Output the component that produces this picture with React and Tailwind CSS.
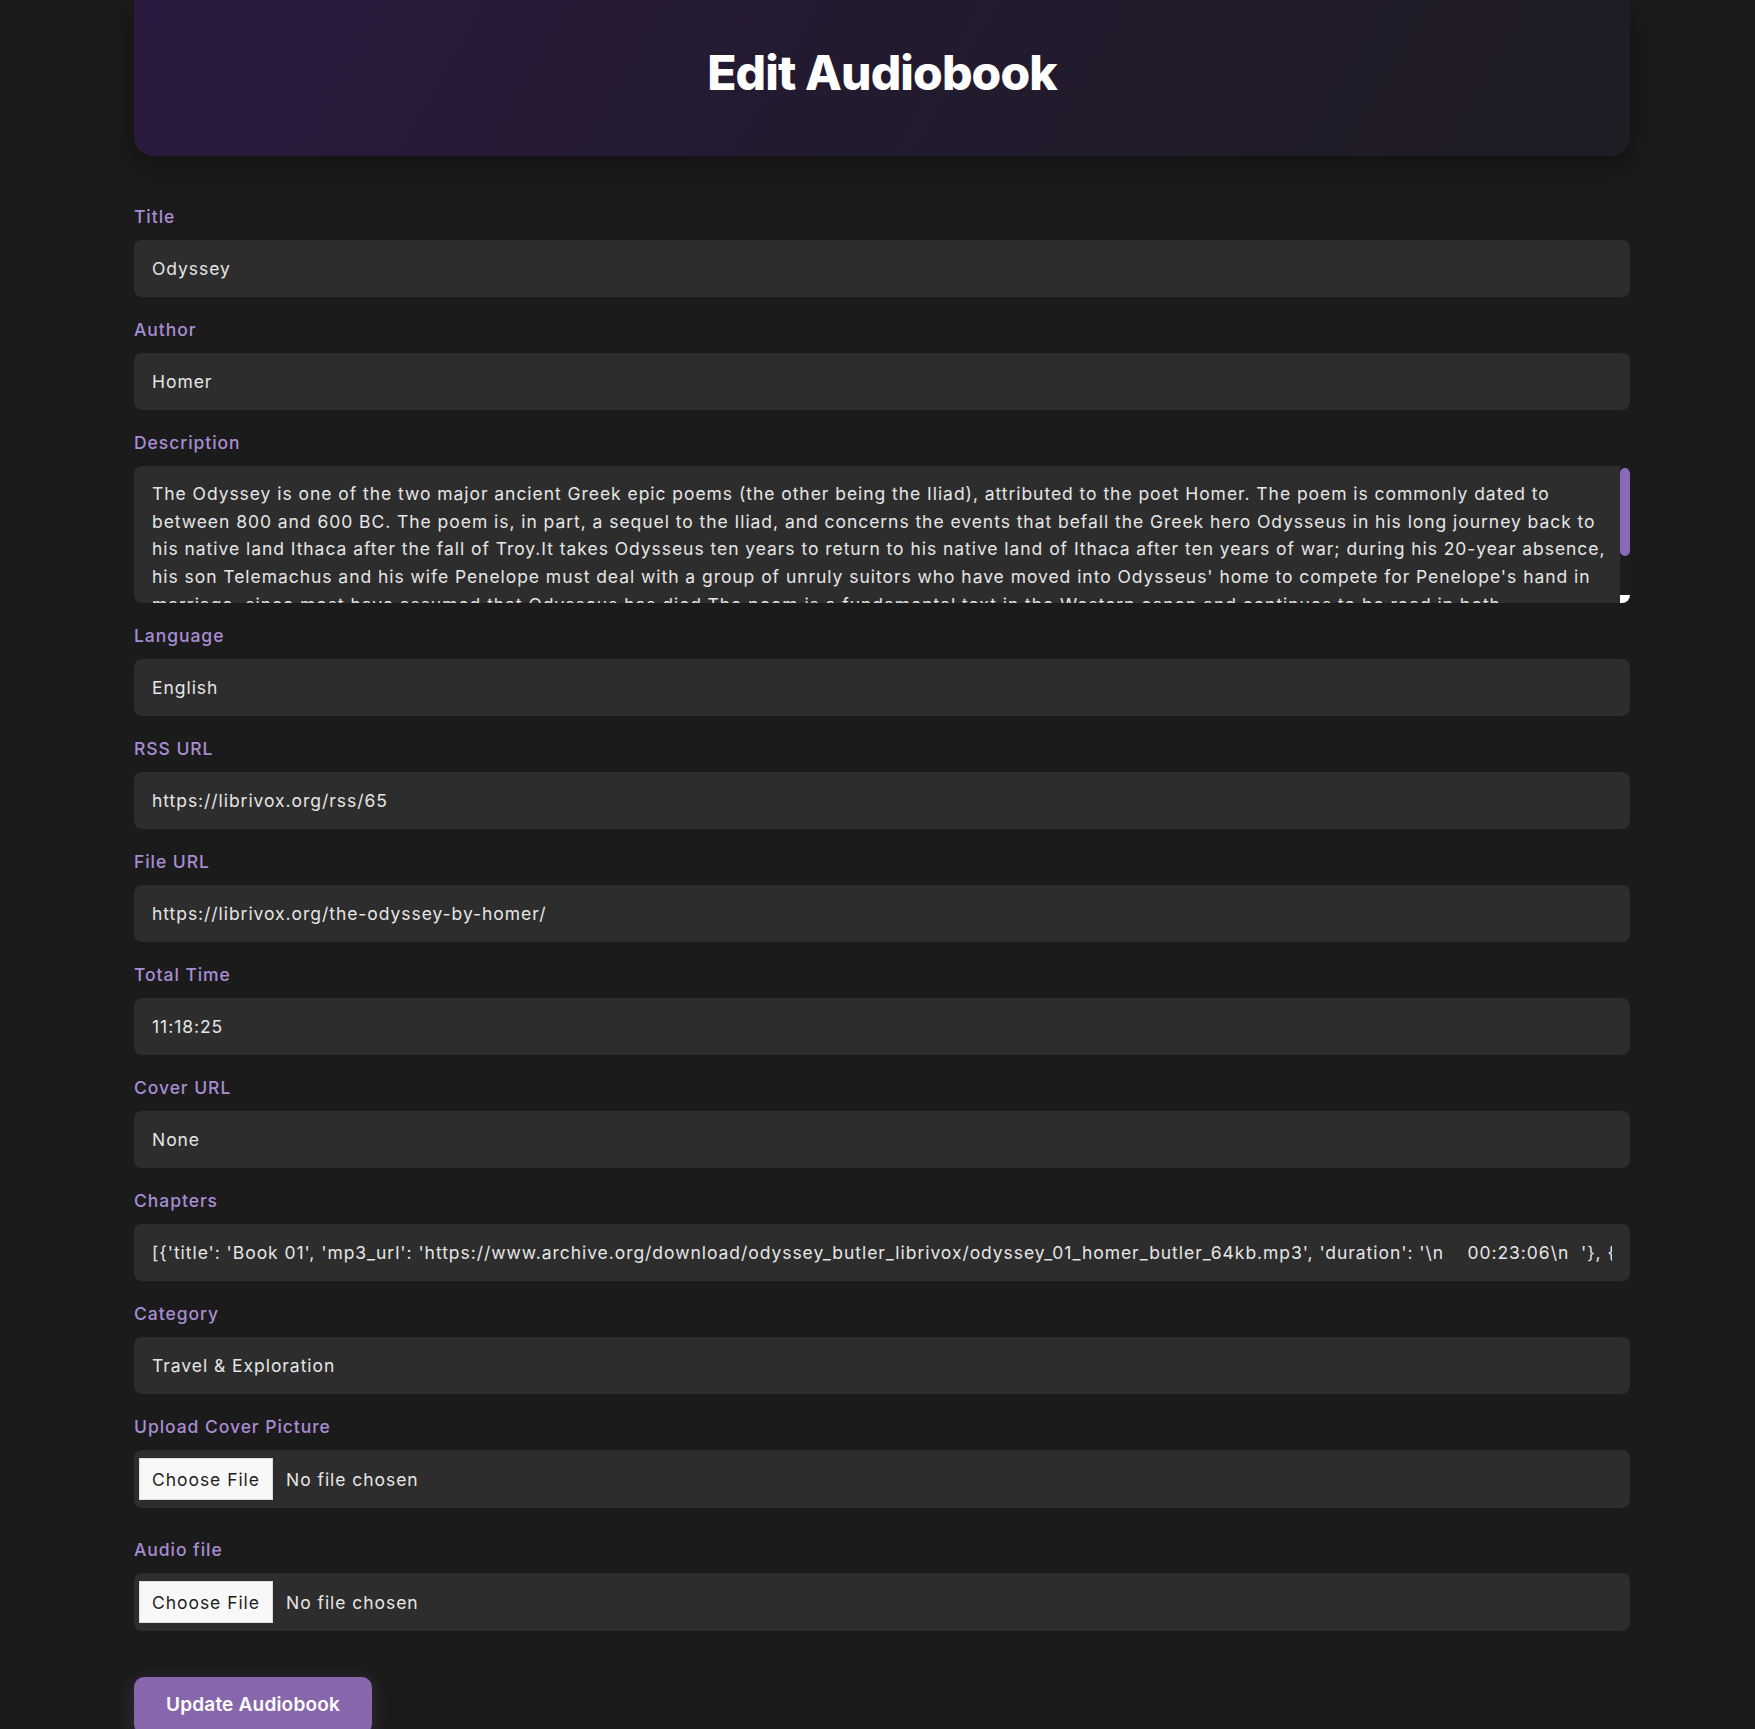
import { useState } from 'react';

const descriptionLines = [
    'The Odyssey is one of the two major ancient Greek epic poems (the other being the Iliad), attributed to the poet Homer. The poem is commonly dated to',
    'between 800 and 600 BC. The poem is, in part, a sequel to the Iliad, and concerns the events that befall the Greek hero Odysseus in his long journey back to',
    'his native land Ithaca after the fall of Troy.It takes Odysseus ten years to return to his native land of Ithaca after ten years of war; during his 20-year absence,',
    "his son Telemachus and his wife Penelope must deal with a group of unruly suitors who have moved into Odysseus' home to compete for Penelope's hand in",
    'marriage, since most have assumed that Odysseus has died.The poem is a fundamental text in the Western canon and continues to be read in both',
];

const chapters =
    "[{'title': 'Book 01', 'mp3_url': 'https://www.archive.org/download/odyssey_butler_librivox/odyssey_01_homer_butler_64kb.mp3', 'duration': '\\n    00:23:06\\n  '}, {'title': 'Book 02', 'mp3_url': 'https://www.archive.org/download/odyssey_butler_librivox/odyssey_02_homer_butler_64kb.mp3'}]";

const labelClass =
    'mb-[11px] block text-[17.5px] font-medium leading-[25px] text-[#a88dd3]';
const inputClass =
    'h-[57px] w-full rounded-[8px] bg-[#2d2d2d] px-[18px] text-[17.5px] text-[#e6e6e6] outline-none';
const fileClass =
    'block h-[58px] w-full rounded-[8px] bg-[#2d2d2d] px-[5px] py-[8px] text-[17.5px] leading-[42px] text-[#e6e6e6] file:mr-[13px] file:h-[42px] file:w-[134px] file:border file:border-[#dcdcdc] file:bg-[#f8f8f8] file:text-[17.5px] file:text-[#1f1f1f]';

function TextField({ label, value }) {
    const [val, setVal] = useState(value);
    return (
        <div className="mb-[20px]">
            <label className={labelClass}>{label}</label>
            <input
                className={inputClass}
                value={val}
                onChange={(e) => setVal(e.target.value)}
            />
        </div>
    );
}

export default function App() {
    return (
        <div className="min-h-screen bg-[#1b1b1b] font-['Inter',sans-serif] tracking-[0.95px]">
            <div className="ml-[134px] w-[1496px] pb-[60px]">
                <header className="flex h-[156px] items-center justify-center rounded-b-[20px] bg-[linear-gradient(120deg,#2b1a3f_0%,#231a30_45%,#1f1c24_100%)] pb-[10px] shadow-[0_10px_30px_rgba(0,0,0,0.35)]">
                    <h1 className="text-[48px] font-extrabold tracking-[-0.9px] text-white">
                        Edit Audiobook
                    </h1>
                </header>

                <form className="mt-[48px]" onSubmit={(e) => e.preventDefault()}>
                    <TextField label="Title" value="Odyssey" />
                    <TextField label="Author" value="Homer" />

                    <div className="mb-[20px]">
                        <label className={labelClass}>Description</label>
                        <div className="flex h-[137px] overflow-hidden rounded-[8px] bg-[#2d2d2d]">
                            <div className="flex-1 overflow-hidden pl-[18px] pt-[14px] text-[17.5px] leading-[27.7px] text-[#e6e6e6]">
                                {descriptionLines.map((line) => (
                                    <div key={line} className="whitespace-nowrap">
                                        {line}
                                    </div>
                                ))}
                            </div>
                            <div className="flex w-[10px] flex-col bg-[#1c1c1c]">
                                <div className="mt-[2px] h-[88px] rounded-full bg-[#8a69b8]" />
                                <div className="flex-1" />
                                <div className="h-[8px] bg-white" />
                            </div>
                        </div>
                    </div>

                    <TextField label="Language" value="English" />
                    <TextField label="RSS URL" value="https://librivox.org/rss/65" />
                    <TextField
                        label="File URL"
                        value="https://librivox.org/the-odyssey-by-homer/"
                    />
                    <TextField label="Total Time" value="11:18:25" />
                    <TextField label="Cover URL" value="None" />
                    <TextField label="Chapters" value={chapters} />
                    <TextField label="Category" value="Travel & Exploration" />

                    <div className="mb-[29px]">
                        <label className={labelClass}>Upload Cover Picture</label>
                        <input type="file" className={fileClass} />
                    </div>

                    <div className="mb-[46px]">
                        <label className={labelClass}>Audio file</label>
                        <input type="file" className={fileClass} />
                    </div>

                    <button
                        type="submit"
                        className="h-[57px] w-[238px] rounded-[10px] bg-[#8766ab] text-[19px] font-semibold tracking-[0.2px] text-white shadow-[0_4px_18px_rgba(135,102,171,0.25)]"
                    >
                        Update Audiobook
                    </button>
                </form>
            </div>
        </div>
    );
}
